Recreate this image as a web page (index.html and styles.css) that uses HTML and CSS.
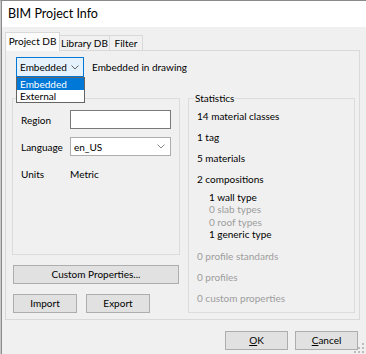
FILE: index.html
```html
<!DOCTYPE html>
<html>
<head>
<meta charset="utf-8">
<link rel="stylesheet" href="styles.css">
</head>
<body>
<div class="window">
  <div class="frame">
    <div class="titlebar">BIM Project Info</div>
    <div class="client">
      <div class="tabs">
        <div class="tab active">Project DB</div>
        <div class="tab tab-lib">Library DB</div>
        <div class="tab tab-filter">Filter</div>
      </div>
      <div class="panel">
        <div class="source-row">
          <div class="combo focused">
            <span>Embedded</span>
            <svg class="chev" width="8" height="5" viewBox="0 0 8 5"><polyline points="0.5,0.5 4,4 7.5,0.5" fill="none" stroke="#606060" stroke-width="1"/></svg>
          </div>
          <span class="source-label">Embedded in drawing</span>
          <div class="dropdown">
            <div class="opt selected">Embedded</div>
            <div class="opt">External</div>
          </div>
        </div>
        <div class="columns">
          <div class="left-col">
            <div class="group left-group">
              <div class="form">
                <span class="lbl">Region</span>
                <div class="field"></div>
                <span class="lbl">Language</span>
                <div class="field select">
                  <span>en_US</span>
                  <svg class="chev" width="8" height="5" viewBox="0 0 8 5"><polyline points="0.5,0.5 4,4 7.5,0.5" fill="none" stroke="#8a8a8a" stroke-width="1"/></svg>
                </div>
                <span class="lbl">Units</span>
                <span class="lbl">Metric</span>
              </div>
            </div>
            <div class="btn wide">Custom Properties...</div>
            <div class="btn-row">
              <div class="btn small">Import</div>
              <div class="btn small">Export</div>
            </div>
          </div>
          <div class="group stats">
            <span class="legend">Statistics</span>
            <div class="stat">14 material classes</div>
            <div class="stat">1 tag</div>
            <div class="stat">5 materials</div>
            <div class="stat">2 compositions</div>
            <div class="sub first">1 wall type</div>
            <div class="sub dim">0 slab types</div>
            <div class="sub dim">0 roof types</div>
            <div class="sub">1 generic type</div>
            <div class="stat after-sub dim">0 profile standards</div>
            <div class="stat dim">0 profiles</div>
            <div class="stat dim">0 custom properties</div>
          </div>
        </div>
      </div>
      <div class="dialog-buttons">
        <div class="btn dlg"><u>O</u>K</div>
        <div class="btn dlg"><u>C</u>ancel</div>
      </div>
    </div>
    <svg class="grip" width="10" height="10" viewBox="0 0 10 10">
      <rect x="8" y="0" width="2" height="2" fill="#bcbcbc"/>
      <rect x="4" y="4" width="2" height="2" fill="#bcbcbc"/>
      <rect x="8" y="4" width="2" height="2" fill="#bcbcbc"/>
      <rect x="0" y="8" width="2" height="2" fill="#bcbcbc"/>
      <rect x="4" y="8" width="2" height="2" fill="#bcbcbc"/>
      <rect x="8" y="8" width="2" height="2" fill="#bcbcbc"/>
    </svg>
  </div>
</div>
</body>
</html>
```
FILE: styles.css
```css
html, body {
  margin: 0;
  padding: 0;
}
body {
  width: 366px;
  height: 354px;
  overflow: hidden;
  background: #f0f0f0;
  font-family: Lato, "Segoe UI", "Noto Sans", sans-serif;
  font-size: 10px;
  color: #000;
}
.window {
  height: 354px;
  box-sizing: border-box;
  border-top: 1px solid #8a8a8a;
  border-left: 1px solid #c8c8c8;
}
.frame {
  position: relative;
  height: 100%;
  border-left: 1px solid #8a8a8a;
  display: flex;
  flex-direction: column;
}
.titlebar {
  height: 26px;
  background: #fff;
  padding-left: 6px;
  font-size: 12.5px;
  line-height: 26px;
}
.client {
  flex: 1;
  padding: 5px 0 0 3px;
}
.tabs {
  display: flex;
  align-items: flex-end;
  height: 18px;
}
.tab {
  box-sizing: border-box;
  height: 15px;
  line-height: 14px;
  text-align: center;
  border: 1px solid #d9d9d9;
  border-left: none;
  border-bottom: none;
  background: #f0f0f0;
}
.tab.active {
  width: 55px;
  height: 19px;
  line-height: 17px;
  margin-bottom: -1px;
  border-left: 1px solid #d9d9d9;
  background: #fbfbfb;
  position: relative;
  z-index: 1;
}
.tab-lib { width: 50px; }
.tab-filter { width: 33px; }
.panel {
  box-sizing: border-box;
  width: 355px;
  height: 270px;
  border: 1px solid #d9d9d9;
  background: #f0f0f0;
}
.source-row {
  position: relative;
  display: flex;
  align-items: center;
  margin: 6px 0 0 10px;
}
.combo {
  box-sizing: border-box;
  width: 68px;
  height: 20px;
  display: flex;
  align-items: center;
  justify-content: space-between;
  padding: 0 4px 0 3px;
}
.combo.focused {
  background: #e5f1fb;
  border: 1px solid #0078d7;
}
.source-label {
  margin-left: 8px;
}
.dropdown {
  position: absolute;
  left: 0;
  top: 20px;
  width: 69px;
  box-sizing: border-box;
  border: 1px solid #646464;
  background: #fff;
  z-index: 5;
}
.opt {
  height: 12px;
  line-height: 12px;
  padding-left: 3px;
}
.opt.selected {
  background: #0078d7;
  color: #fff;
}
.columns {
  display: flex;
  margin: 21px 0 0 6px;
  gap: 8px;
}
.left-col {
  width: 168px;
  display: flex;
  flex-direction: column;
}
.group {
  position: relative;
  box-sizing: border-box;
  border: 1px solid #dcdcdc;
}
.legend {
  position: absolute;
  top: -7px;
  left: 5px;
  padding: 0 1px;
  line-height: 12px;
  background: #f0f0f0;
}
.left-group {
  height: 157px;
  padding: 11px 0 0 8px;
}
.form {
  display: grid;
  grid-template-columns: 49px 101px;
  grid-auto-rows: 19px;
  row-gap: 8px;
  align-items: center;
}
.field {
  box-sizing: border-box;
  height: 19px;
  border: 1px solid #7a7a7a;
  background: #fff;
}
.field.select {
  border-color: #adadad;
  display: flex;
  align-items: center;
  justify-content: space-between;
  padding: 0 5px 0 3px;
}
.btn {
  box-sizing: border-box;
  height: 19px;
  line-height: 17px;
  text-align: center;
  background: #e1e1e1;
  border: 1px solid #adadad;
}
.btn.wide {
  width: 166px;
  margin: 10px 0 0 1px;
}
.btn-row {
  display: flex;
  gap: 9px;
  margin: 10px 0 0 1px;
}
.btn.small { width: 64px; }
.stats {
  width: 167px;
  height: 215px;
  padding: 11px 0 0 8px;
}
.stat {
  line-height: 12px;
  margin-top: 9px;
}
.stats .legend + .stat { margin-top: 0; }
.sub {
  line-height: 12.3px;
  padding-left: 12px;
}
.sub.first { margin-top: 6px; }
.stat.after-sub { margin-top: 10px; }
.dim { color: #9d9d9d; }
.dialog-buttons {
  display: flex;
  justify-content: flex-end;
  gap: 7px;
  margin-top: 11px;
  padding-right: 8px;
}
.btn.dlg { width: 63px; }
.grip {
  position: absolute;
  right: 2px;
  bottom: 1px;
}
```
